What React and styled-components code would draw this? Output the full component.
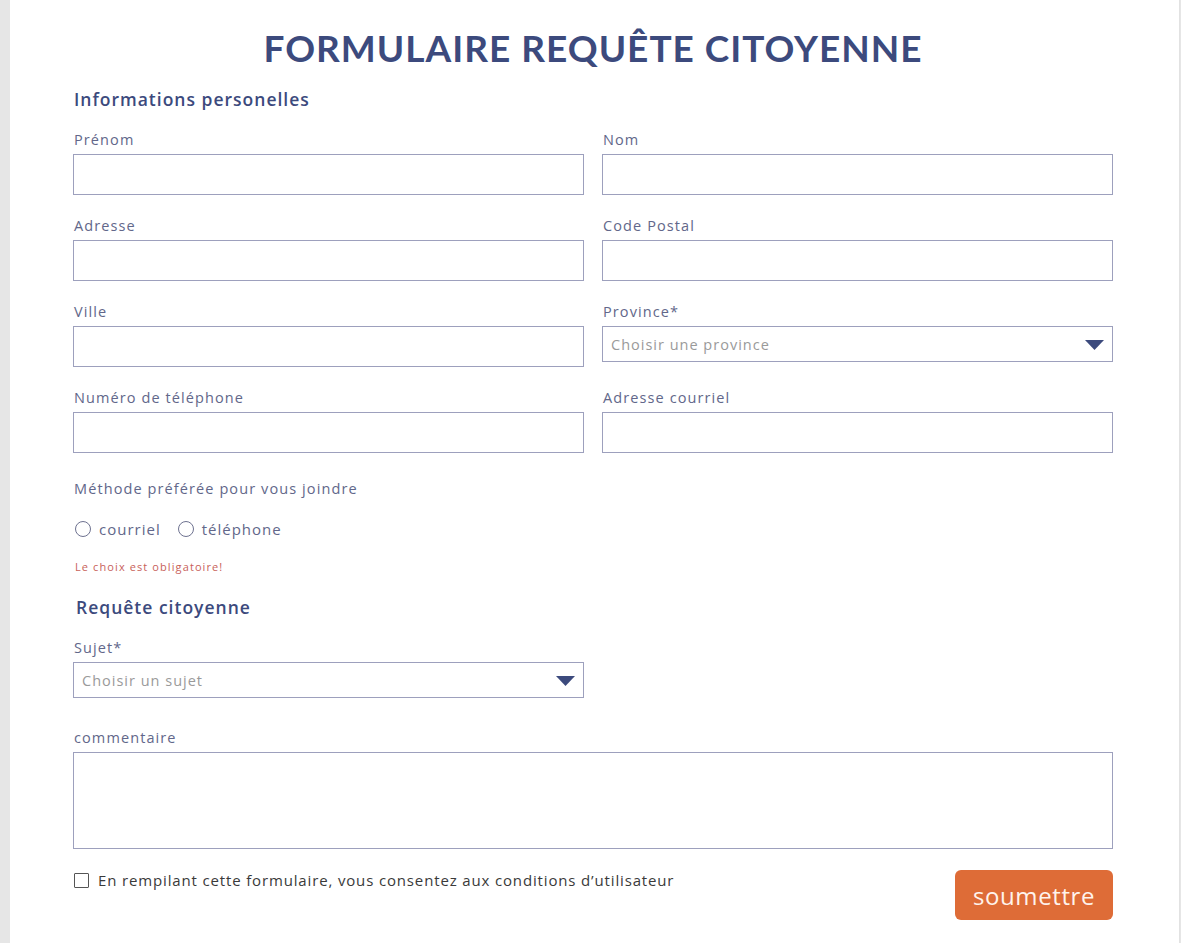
import React from 'react';
import styled, { createGlobalStyle } from 'styled-components';

const GlobalStyle = createGlobalStyle`
  html, body {
    margin: 0;
    padding: 0;
    background: #e6e6e6;
    font-family: 'Open Sans', 'Noto Sans', sans-serif;
  }
  * { box-sizing: border-box; }
`;

const Page = styled.div`
  padding-left: 10px;
  min-height: 943px;
  display: flex;
`;

const Card = styled.form`
  width: 1170px;
  background: #ffffff;
  border-right: 1px solid #e2e2e2;
  padding: 22px 66px 22px 63px;
  color: #62678a;
`;

const Title = styled.h1`
  margin: 0;
  text-align: center;
  font-family: 'Lato', 'Open Sans', sans-serif;
  font-size: 37px;
  line-height: 52px;
  font-weight: 700;
  letter-spacing: 1px;
  color: #3c4a7d;
`;

const SectionTitle = styled.h2`
  margin: ${(p) => p.$top}px 0 0 ${(p) => p.$indent || 1}px;
  font-size: 17.5px;
  line-height: 24px;
  font-weight: 600;
  letter-spacing: 1px;
  color: #3c4a7d;
`;

const Grid = styled.div`
  margin-top: 19px;
  display: grid;
  grid-template-columns: 1fr 1fr;
  column-gap: 18px;
  row-gap: 21px;
  align-items: start;
`;

const Field = styled.div`
  display: flex;
  flex-direction: column;
  margin-top: ${(p) => p.$top || 0}px;
  width: ${(p) => (p.$half ? '511px' : '100%')};
`;

const Label = styled.label`
  font-size: 14.5px;
  line-height: 20px;
  letter-spacing: 1.1px;
  margin: 0 0 4px 1px;
  color: #62678a;
`;

const Input = styled.input`
  height: 41px;
  width: 100%;
  border: 1px solid #9da0bd;
  border-radius: 0;
  padding: 0 8px;
  font: inherit;
  font-size: 15px;
  outline: none;
`;

const SelectBox = styled.div`
  position: relative;
  height: 36px;
`;

const Select = styled.select`
  appearance: none;
  width: 100%;
  height: 36px;
  border: 1px solid #9da0bd;
  border-radius: 0;
  background: #fff;
  padding: 0 8px;
  font-family: inherit;
  font-size: 14.5px;
  letter-spacing: 1px;
  color: #9a9a9a;
  outline: none;
`;

const Arrow = styled.svg`
  position: absolute;
  right: 9px;
  top: 14px;
  pointer-events: none;
`;

const TextArea = styled.textarea`
  height: 97px;
  width: 100%;
  border: 1px solid #9da0bd;
  border-radius: 0;
  resize: none;
  font: inherit;
  outline: none;
`;

const Text = styled.p`
  margin: ${(p) => p.$top}px 0 0 1px;
  font-size: 14.5px;
  line-height: 20px;
  letter-spacing: 1.1px;
`;

const RadioRow = styled.div`
  margin-top: 20px;
  display: flex;
  align-items: center;
  gap: 17px;
  padding-left: 2px;
  height: 20px;
`;

const RadioOption = styled.label`
  display: flex;
  align-items: center;
  gap: 8px;
  font-size: 15px;
  letter-spacing: 1px;
  color: #62678a;
`;

const Radio = styled.input`
  appearance: none;
  margin: 0;
  width: 16px;
  height: 16px;
  border: 1.5px solid #6e7290;
  border-radius: 50%;
`;

const Error = styled.p`
  margin: 20px 0 0 2px;
  font-size: 11px;
  line-height: 16px;
  letter-spacing: 1.1px;
  color: #c8615a;
`;

const Footer = styled.div`
  margin-top: 21px;
  display: flex;
  justify-content: space-between;
  align-items: flex-start;
`;

const Consent = styled.label`
  margin-top: 3px;
  display: flex;
  align-items: center;
  gap: 9px;
  font-size: 15px;
  line-height: 15px;
  letter-spacing: 0.85px;
  color: #3a3a3a;
`;

const Checkbox = styled.input`
  appearance: none;
  margin: 0 0 0 1px;
  width: 15px;
  height: 15px;
  border: 1.5px solid #555;
  border-radius: 1px;
`;

const Submit = styled.button`
  width: 158px;
  height: 50px;
  border: none;
  border-radius: 6px;
  background: #de6c37;
  color: #fff3ec;
  font-family: inherit;
  font-size: 24px;
  letter-spacing: 0.6px;
  cursor: pointer;
`;

const SelectField = ({ placeholder }) => (
  <SelectBox>
    <Select defaultValue="">
      <option value="" disabled>{placeholder}</option>
    </Select>
    <Arrow width="19" height="10" viewBox="0 0 19 10">
      <path d="M0 0 H19 L9.5 10 Z" fill="#3c4a7d" />
    </Arrow>
  </SelectBox>
);

const App = () => {
  const fields = [
    { label: 'Prénom' },
    { label: 'Nom' },
    { label: 'Adresse' },
    { label: 'Code Postal' },
    { label: 'Ville' },
    { label: 'Province*', select: 'Choisir une province' },
    { label: 'Numéro de téléphone' },
    { label: 'Adresse courriel' },
  ];

  return (
    <>
      <GlobalStyle />
      <Page>
        <Card onSubmit={(e) => e.preventDefault()}>
          <Title>FORMULAIRE REQUÊTE CITOYENNE</Title>
          <SectionTitle $top={13}>Informations personelles</SectionTitle>
          <Grid>
            {fields.map((f) => (
              <Field key={f.label}>
                <Label>{f.label}</Label>
                {f.select ? <SelectField placeholder={f.select} /> : <Input type="text" />}
              </Field>
            ))}
          </Grid>

          <Text $top={26}>Méthode préférée pour vous joindre</Text>
          <RadioRow>
            <RadioOption>
              <Radio type="radio" name="contact" />
              courriel
            </RadioOption>
            <RadioOption>
              <Radio type="radio" name="contact" />
              téléphone
            </RadioOption>
          </RadioRow>
          <Error>Le choix est obligatoire!</Error>

          <SectionTitle $top={20} $indent={3}>Requête citoyenne</SectionTitle>
          <Field $top={19} $half>
            <Label>Sujet*</Label>
            <SelectField placeholder="Choisir un sujet" />
          </Field>
          <Field $top={30}>
            <Label>commentaire</Label>
            <TextArea />
          </Field>

          <Footer>
            <Consent>
              <Checkbox type="checkbox" />
              En rempilant cette formulaire, vous consentez aux conditions d’utilisateur
            </Consent>
            <Submit type="submit">soumettre</Submit>
          </Footer>
        </Card>
      </Page>
    </>
  );
};

export default App;
